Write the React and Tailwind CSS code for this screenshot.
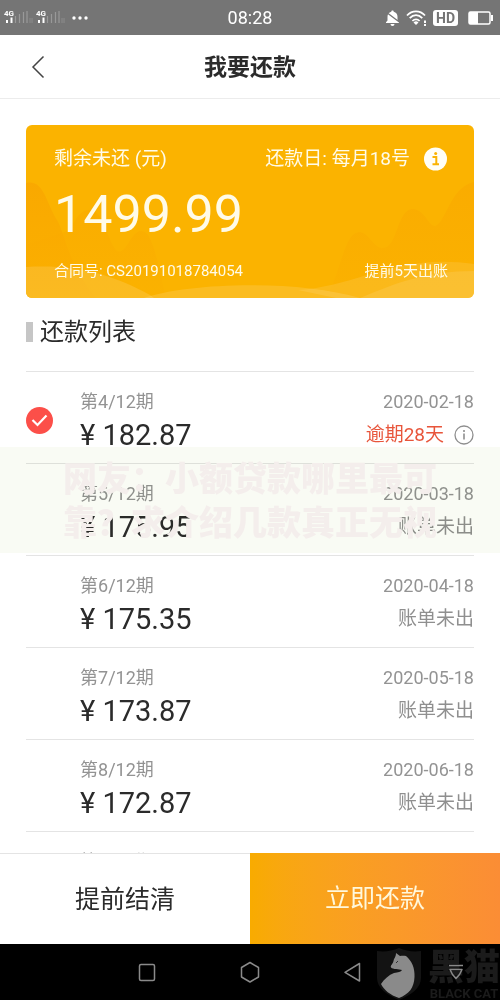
import React from "react";

const installments = [
  { period: 4, amount: "182.87", date: "2020-02-18", overdue: "逾期28天" },
  { period: 5, amount: "175.95", date: "2020-03-18" },
  { period: 6, amount: "175.35", date: "2020-04-18" },
  { period: 7, amount: "173.87", date: "2020-05-18" },
  { period: 8, amount: "172.87", date: "2020-06-18" },
  { period: 9, amount: "171.87", date: "2020-07-18" },
];

const SignalIcon = () => (
  <svg width="30" height="18" viewBox="0 0 30 18" aria-hidden="true">
    <text x="0" y="7" fontSize="8" fontWeight="700" fill="#fff">
      4G
    </text>
    <path d="M3 11v3M7.500 8.500v5.500" stroke="#fff" strokeWidth="2" />
    <path
      d="M11.500 7v7M15.500 5v9M19.500 3v11M23 2v12"
      stroke="#999"
      strokeWidth="1.200"
    />
    <path d="M26 9v5M28 9v5" stroke="#8d8d8d" strokeWidth="1" />
  </svg>
);

const StatusBar = () => (
  <div className="flex h-[35px] shrink-0 items-center bg-[#757575] px-1 text-white">
    <div className="flex flex-1 items-center gap-[2px]">
      <SignalIcon />
      <SignalIcon />
      <svg width="20" height="6" viewBox="0 0 20 6" className="ml-[2px]" fill="#fff">
        <circle cx="4" cy="3" r="1.700" />
        <circle cx="10" cy="3" r="1.700" />
        <circle cx="16" cy="3" r="1.700" />
      </svg>
    </div>
    <span className="text-lg">08:28</span>
    <div className="flex flex-1 items-center justify-end gap-[6px]">
      <svg width="15" height="18" viewBox="0 0 15 18" fill="#fff">
        <path d="M7.500 1.500c.8 0 1.200.5 1.200 1.200 2.500.5 3.800 2.500 3.800 5v3.800l1.500 1.800v.7H1v-.7l1.500-1.800V7.700c0-2.500 1.300-4.500 3.800-5 0-.7.4-1.200 1.200-1.200zM5.500 15h4a2 2 0 0 1-4 0z" />
        <path d="M1 3l14 10.500" stroke="#757575" strokeWidth="1.400" />
      </svg>
      <svg width="21" height="18" viewBox="0 0 21 18" fill="none" stroke="#fff">
        <path
          d="M1 6.500C6 1 14 1 19 6.500M3.700 9.200c3.800-4 8.800-4 12.600 0M6.400 12c2.200-2.300 5-2.300 7.200 0"
          strokeWidth="1.800"
        />
        <path d="M7.500 13.500a3.500 3.500 0 0 1 5 0L10 16z" fill="#fff" stroke="none" />
        <path d="M19 11.500v2.500M19 15v2" strokeWidth="2" />
      </svg>
      <span className="rounded-[3px] bg-white px-[3px] text-sm leading-4 font-bold text-[#757575]">
        HD
      </span>
      <svg width="26" height="14" viewBox="0 0 26 14" className="ml-1 mr-[2px]">
        <rect x="1" y="1" width="21" height="12" rx="1.500" fill="none" stroke="#fff" strokeWidth="1.500" />
        <path d="M1 1h9v12H1z" fill="#fff" />
        <path d="M24 4v6" stroke="#fff" strokeWidth="2" />
      </svg>
    </div>
  </div>
);

const Header = () => (
  <header className="grid h-16 shrink-0 grid-cols-[1fr_auto_1fr] items-center border-b border-[#ececec] px-[26px]">
    <button aria-label="返回" className="flex h-10 w-6 items-center justify-center">
      <svg width="14" height="24" viewBox="0 0 14 24" fill="none" stroke="#444" strokeWidth="1.500">
        <path d="M12.500 1.500L2 12l10.500 10.500" />
      </svg>
    </button>
    <h1 className="pt-1 text-[23px] font-bold text-[#2b2b2b]">我要还款</h1>
  </header>
);

const SummaryCard = () => (
  <section className="relative mx-[26px] mt-[26px] shrink-0 overflow-hidden rounded-md bg-[#fbb300] pt-5 pr-[26px] pb-[15px] pl-7 text-[#fffbe8]">
    <svg
      className="absolute inset-0 h-full w-full"
      viewBox="0 0 448 173"
      preserveAspectRatio="none"
      aria-hidden="true"
    >
      <defs>
        <linearGradient id="hill" x1="0" y1="0" x2="0" y2="1">
          <stop offset="0" stopColor="#f9a500" />
          <stop offset="1" stopColor="#fbb000" />
        </linearGradient>
      </defs>
      <path
        d="M44 105C52 88 58 84 66 85C78 88 82 116 90 125C100 133 104 106 115 106C126 106 130 130 140 173H0V120z"
        fill="url(#hill)"
        opacity=".4"
      />
      <path d="M0 58C18 54 20 78 31 95C39 108 42 140 70 173H0z" fill="url(#hill)" opacity=".75" />
      <path
        d="M300 173C314 150 318 108 333 107C343 107 346 122 356 123C372 124 370 86 386 84C399 84 402 101 409 101C420 98 424 62 448 57V173z"
        fill="url(#hill)"
        opacity=".5"
      />
      <path d="M0 142C50 139 88 150 124 170L128 173H0z" fill="#fff" opacity=".13" />
      <path d="M118 173C160 158 270 154 334 173z" fill="#fff" opacity=".13" />
      <path d="M272 165C330 162 370 128 448 139V173H310z" fill="#fff" opacity=".1" />
      <path d="M334 173C370 158 400 146 448 146V173z" fill="#fff" opacity=".1" />
    </svg>
    <div className="relative">
      <div className="flex items-center justify-between text-[19px] leading-7">
        <span>剩余未还 (元)</span>
        <span className="flex items-center gap-[13px]">
          还款日: 每月18号
          <button aria-label="还款日说明">
            <svg width="25" height="24" viewBox="0 0 25 24">
              <circle cx="12.500" cy="12" r="11.500" fill="#fffef6" />
              <path
                d="M9.500 10h3.800v7M9.500 17.300h6.500"
                fill="none"
                stroke="#fbb300"
                strokeWidth="2"
              />
              <circle cx="12.700" cy="6.500" r="1.500" fill="#fbb300" />
            </svg>
          </button>
        </span>
      </div>
      <p className="mt-3 text-[52px] leading-[60px]">1499.99</p>
      <div className="mt-[14px] flex items-center justify-between text-[15px] leading-6">
        <span>合同号: CS20191018784054</span>
        <span>提前5天出账</span>
      </div>
    </div>
  </section>
);

const Installment = ({ period, amount, date, overdue }) => (
  <li className="grid grid-cols-[54px_1fr_auto] items-center border-t border-[#e4e4e4] pt-4 pb-[10px]">
    <div>
      {overdue && (
        <label className="relative block size-[27px]">
          <input
            type="checkbox"
            defaultChecked
            aria-label={`第${period}/12期`}
            className="block size-[27px] appearance-none rounded-full bg-[#cccccc] checked:bg-[#fc4f49]"
          />
          <svg
            className="pointer-events-none absolute inset-0"
            viewBox="0 0 27 27"
            fill="none"
            stroke="#fff"
            strokeWidth="2.200"
          >
            <path d="M6.500 13l5 5 9-9.500" />
          </svg>
        </label>
      )}
    </div>
    <div>
      <p className="text-lg leading-7 text-[#939393]">第{period}/12期</p>
      <p className="mt-px text-[29px] leading-9 text-[#2b2b2b]">¥ {amount}</p>
    </div>
    <div className="text-right">
      <p className="text-lg leading-7 text-[#939393]">{date}</p>
      {overdue ? (
        <p className="mt-px flex items-center justify-end gap-[10px] text-[19px] leading-9 text-[#e8553b]">
          {overdue}
          <button aria-label="逾期说明">
            <svg width="20" height="20" viewBox="0 0 20 20" fill="none" stroke="#8f8f8f">
              <circle cx="10" cy="10" r="9" strokeWidth="1.300" />
              <path d="M10 8.500v6M10 5v2" strokeWidth="1.600" />
            </svg>
          </button>
        </p>
      ) : (
        <p className="mt-px text-[19px] leading-9 text-[#8f8f8f]">账单未出</p>
      )}
    </div>
  </li>
);

const Caption = () => (
  <div className="pointer-events-none absolute inset-x-0 top-[76px] pt-[10px] pb-2 text-center">
    <div className="absolute inset-0 bg-[#f9fbf4] mix-blend-multiply" />
    <p className="relative text-[34px] leading-[44px] font-black text-[#f4eeec]">
      网友：小额贷款哪里最可
      <br />
      靠？求介绍几款真正无视
    </p>
  </div>
);

const BlackCatMark = () => (
  <div className="pointer-events-none absolute top-1 right-0 flex items-start gap-[6px]">
    <svg width="46" height="52" viewBox="0 0 46 52" aria-hidden="true">
      <path d="M1 3C9 4 16 3 23 0C30 3 37 4 45 3V30C45 40 35 47 23 52C11 47 1 40 1 30z" fill="#131313" />
      <path
        d="M20 5L24 8C26 7.500 28 7.500 30 8C36 13 39 20 38.500 29C38 40 33 46 23 50C14 47 8 42 5 36C8 31 13 27 18 25C22 24 25 24 26 22C23 21 17 21.500 15 19.500C14 17.500 17 16 17.500 13C18 10 20 9 20 5z"
        fill="#8a8a8a"
      />
      <path d="M20 15l2-2" stroke="#333" />
    </svg>
    <div className="text-center text-[#1b1b1b]">
      <p className="text-[36px] leading-10 font-black">黑猫</p>
      <p className="text-[13px] leading-3 font-bold">BLACK CAT</p>
    </div>
  </div>
);

const NavBar = () => (
  <nav className="relative flex h-14 shrink-0 items-center overflow-hidden bg-black">
    <BlackCatMark />
    <div className="relative flex flex-1 items-center justify-between pr-8 pl-[135px]">
      <button aria-label="最近任务">
        <svg width="24" height="24" viewBox="0 0 24 24" fill="none" stroke="#8a8a8a" strokeWidth="1.500">
          <rect x="4.500" y="4.500" width="15" height="16" rx="1.500" />
        </svg>
      </button>
      <button aria-label="主页">
        <svg width="24" height="24" viewBox="0 0 24 24" fill="none" stroke="#8a8a8a" strokeWidth="1.500">
          <path d="M12 2.500l8.500 5v9.500l-8.500 5-8.500-5V7.500z" strokeLinejoin="round" />
        </svg>
      </button>
      <button aria-label="返回上一页">
        <svg width="24" height="24" viewBox="0 0 24 24" fill="none" stroke="#8a8a8a" strokeWidth="1.500">
          <path d="M18.500 3.500v17.500L4 12.300z" strokeLinejoin="round" />
        </svg>
      </button>
      <button aria-label="收起导航栏">
        <svg width="24" height="24" viewBox="0 0 24 24" fill="none" stroke="#8a8a8a" strokeWidth="1.500">
          <path d="M5 5.500h14M6 9.500h12l-2.500 5-3.500 4-3.500-4z" strokeLinejoin="round" />
        </svg>
      </button>
    </div>
  </nav>
);

const App = () => {
  return (
    <div
      lang="zh-CN"
      className="flex h-screen flex-col bg-white font-['Roboto','Noto_Sans_CJK_SC',sans-serif]"
    >
      <StatusBar />
      <Header />
      <main className="flex min-h-0 flex-1 flex-col overflow-hidden">
        <SummaryCard />
        <h2 className="mx-[26px] mt-4 flex shrink-0 items-center gap-[7px] text-[24px] leading-9 text-[#2b2b2b]">
          <span className="h-5 w-[7px] bg-[#c6c6c6]" />
          还款列表
        </h2>
        <div className="relative mt-[21px]">
          <ul className="mx-[26px]">
            {installments.map((item) => (
              <Installment key={item.period} {...item} />
            ))}
          </ul>
          <Caption />
        </div>
      </main>
      <footer className="grid shrink-0 grid-cols-2 text-[25px]">
        <button className="border-t border-[#e4e4e4] pt-[27px] pb-[25px] leading-[38px] text-[#2b2b2b]">
          提前结清
        </button>
        <button className="bg-linear-to-r from-[#f8ab00] to-[#fb8d35] leading-[38px] text-[#fff8dc]">
          立即还款
        </button>
      </footer>
      <NavBar />
    </div>
  );
};

export default App;
